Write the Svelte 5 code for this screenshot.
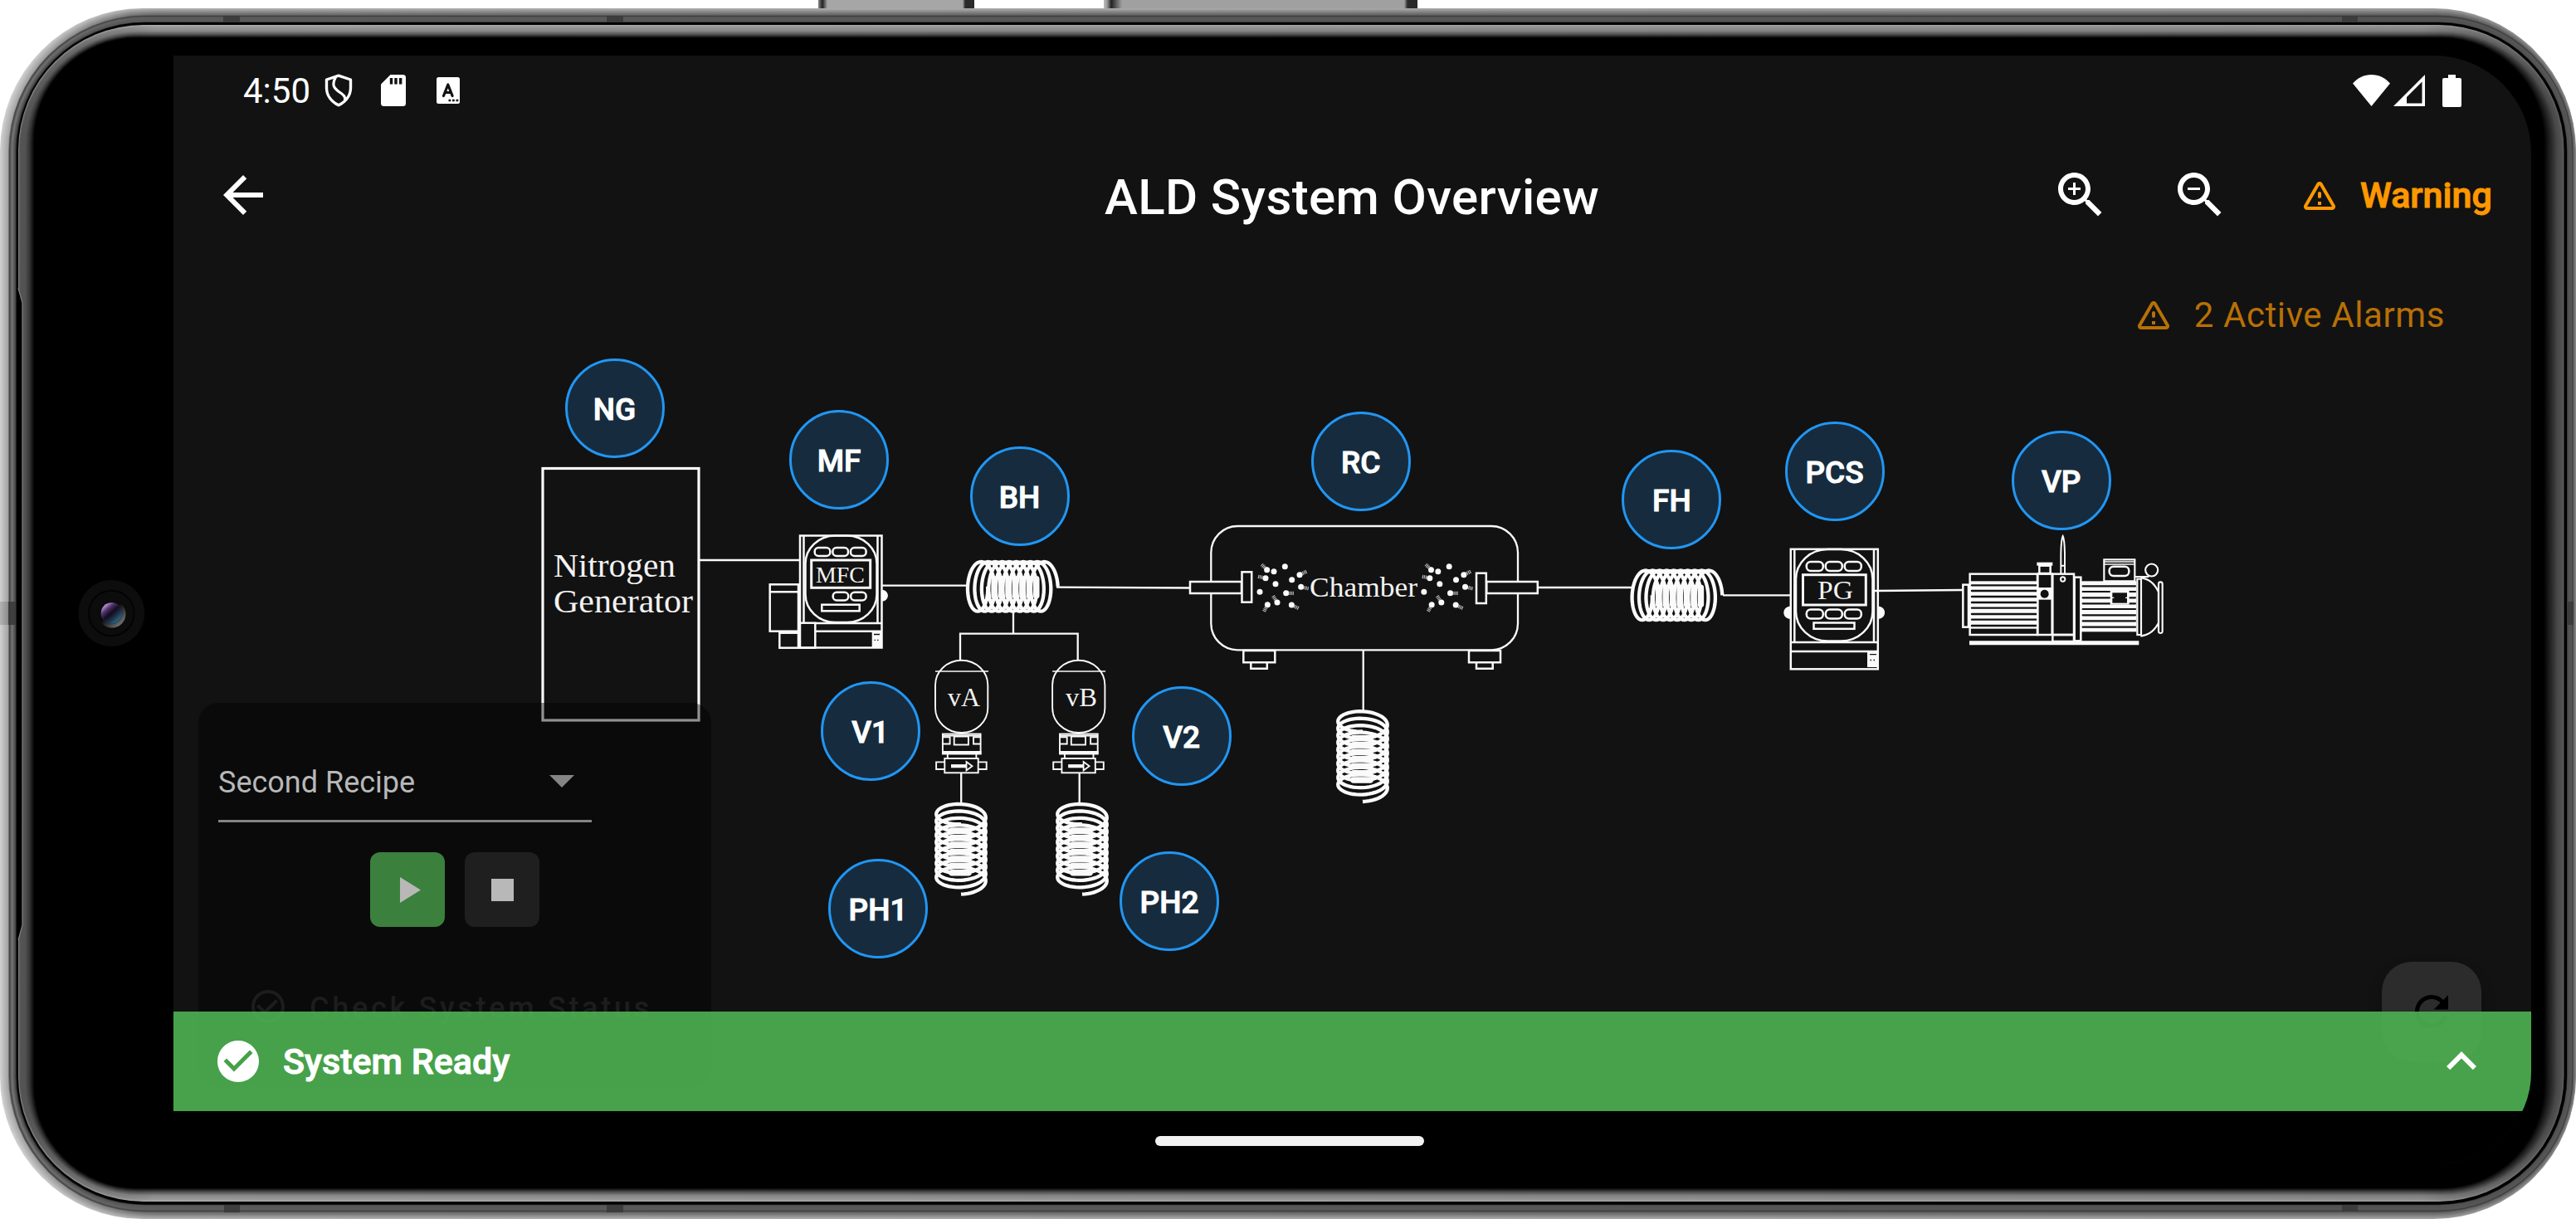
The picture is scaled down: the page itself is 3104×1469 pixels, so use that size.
<script>
  // Metal frame profile, outside in: insets per side (top, left, bottom, right) and grey level for the long edges, the left and the right side
  const keys = [
    { t: 0, l: 0, b: 0, r: 0, m: 176, cl: 208, cr: 140, rad: 172 },
    { t: 8, l: 9, b: 8, r: 3, m: 100, cl: 165, cr: 92, rad: 165 },
    { t: 9, l: 11, b: 9, r: 4, m: 62, cl: 66, cr: 52, rad: 163 },
    { t: 11, l: 14, b: 11, r: 5, m: 92, cl: 118, cr: 86, rad: 161 },
    { t: 16, l: 18, b: 16, r: 10, m: 88, cl: 70, cr: 80, rad: 156 },
    { t: 17, l: 20, b: 17.5, r: 11, m: 0, cl: 0, cr: 0, rad: 155 },
    { t: 19.5, l: 21.5, b: 20.5, r: 14, m: 0, cl: 0, cr: 0, rad: 152 },
    { t: 20, l: 22, b: 21, r: 14.5, m: 172, cl: 130, cr: 96, rad: 151 },
    { t: 21.5, l: 23.5, b: 22.5, r: 16, m: 158, cl: 84, cr: 82, rad: 150 },
    { t: 27, l: 30, b: 28, r: 22, m: 136, cl: 80, cr: 72, rad: 140 },
    { t: 31, l: 35, b: 32, r: 29, m: 84, cl: 52, cr: 40, rad: 132 },
    { t: 35.5, l: 41, b: 37, r: 38, m: 0, cl: 0, cr: 0, rad: 124 }
  ];
  const mix = (a, b, f) => a + (b - a) * f;
  const layers = [];
  keys.forEach((k, i) => {
    const n = keys[i + 1];
    const steps = n ? Math.max(1, Math.round((n.l - k.l) * 1.2)) : 1;
    for (let s = 0; s < steps; s++) {
      const o = {};
      for (const p of Object.keys(k)) o[p] = n ? mix(k[p], n[p], s / steps) : k[p];
      layers.push(o);
    }
  });
  const grey = (v) => `rgb(${Math.round(v)},${Math.round(v)},${Math.round(v)})`;

  // Heater coil: a flattened helix drawn from its free end
  let coil = '';
  for (let i = 0; i <= 480; i++) {
    const t = i / 48;
    const a = t * Math.PI * 2;
    const x = -14.2 - 8.45 * t + 14.2 * Math.cos(a);
    const y = -29.8 * Math.sin(a);
    coil += `${i ? 'L' : 'M'}${x.toFixed(2)} ${y.toFixed(2)}`;
  }
  // Overlapping windings fill the middle of the coil
  let core = '';
  for (let i = 0; i < 7; i++) core += `M${(-76.6 + i * 8.45).toFixed(2)} -9V11`;

  const badges = [
    { id: 'NG', x: 740.5, y: 492 },
    { id: 'MF', x: 1011, y: 554 },
    { id: 'BH', x: 1228.5, y: 598 },
    { id: 'RC', x: 1639.7, y: 556 },
    { id: 'FH', x: 2014.4, y: 602 },
    { id: 'PCS', x: 2210.6, y: 568 },
    { id: 'VP', x: 2483.7, y: 579 },
    { id: 'V1', x: 1048.6, y: 881 },
    { id: 'V2', x: 1423.6, y: 887 },
    { id: 'PH1', x: 1058, y: 1095 },
    { id: 'PH2', x: 1409, y: 1086 }
  ];

  const dots = [[380, 620], [405, 626], [445, 608], [498, 638], [375, 650], [470, 656], [411, 671], [503, 682], [354, 700], [449, 704], [417, 738], [382, 746], [469, 747]];
  const tails = [[380, 620, 361, 601], [375, 650, 346, 644], [498, 638, 525, 625], [503, 682, 531, 688], [449, 704, 477, 705], [417, 738, 401, 713], [382, 746, 369, 771], [469, 747, 496, 760]];
  const bodyLines = [616, 636, 657, 678, 698, 720, 740, 762];
  const motorLines = [619, 639, 661, 682, 702, 724, 745, 767];
</script>

<div class="phone">
  <div class="side-key power"></div>
  <div class="side-key volume"></div>
  <svg class="frame" viewBox="0 0 3104 1469" aria-hidden="true">
    <defs>
      {#each layers as k, i}
        <linearGradient id="ring{i}" gradientUnits="userSpaceOnUse" x1="0" y1="0" x2="3104" y2="0">
          <stop offset="0.008" stop-color={grey(k.cl)} />
          <stop offset="0.06" stop-color={grey(k.m)} />
          <stop offset="0.94" stop-color={grey(k.m * 0.92)} />
          <stop offset="0.99" stop-color={grey(k.cr)} />
        </linearGradient>
      {/each}
      <radialGradient id="lens" cx="0.5" cy="0.5" r="0.5">
        <stop offset="0" stop-color="#140b1e" />
        <stop offset="0.7" stop-color="#1a1230" />
        <stop offset="1" stop-color="#2a1e44" />
      </radialGradient>
      <linearGradient id="glint" x1="0.15" y1="0.1" x2="0.85" y2="0.9">
        <stop offset="0" stop-color="#d8aef4" />
        <stop offset="0.25" stop-color="#5a3c76" stop-opacity="0.8" />
        <stop offset="0.48" stop-color="#120a1c" stop-opacity="0.7" />
        <stop offset="0.88" stop-color="#285a74" />
      </linearGradient>
      <linearGradient id="rim" x1="0.2" y1="0.2" x2="0.8" y2="0.85">
        <stop offset="0.4" stop-color="#0a0a0a" />
        <stop offset="1" stop-color="#6a6a6a" />
      </linearGradient>
    </defs>
    {#each layers as k, i}
      <rect x={k.l} y={10 + k.t} width={3104 - k.l - k.r} height={1459 - k.t - k.b} rx={k.rad} fill="url(#ring{i})" />
    {/each}
    <path d="M21 345L27 365V1115L21 1135Z" fill="#000" />
    <path d="M22 347L27 365V1115L22 1133" fill="none" stroke="#808080" stroke-width="1.2" />
    <g fill="#3a3a3a" opacity="0.9">
      <rect x="269" y="19" width="20" height="8" /><rect x="731" y="19" width="20" height="8" /><rect x="2822" y="19" width="19" height="8" />
      <rect x="270" y="1452" width="19" height="9" /><rect x="731" y="1452" width="20" height="9" /><rect x="2822" y="1452" width="19" height="8" />
      <rect x="10" y="725" width="9" height="28" /><rect x="3094" y="725" width="7" height="28" />
    </g>
    <rect x="0" y="725" width="10" height="28" fill="#000" opacity="0.14" />
    <circle cx="134.3" cy="739" r="40" fill="#0d0d0d" />
    <circle cx="134.3" cy="739" r="27.3" fill="#0c0c0c" stroke="#030303" stroke-width="2" />
    <circle cx="135" cy="740" r="16.5" fill="url(#rim)" />
    <circle cx="134.5" cy="739" r="13" fill="url(#lens)" />
    <circle cx="134.5" cy="739" r="12.8" fill="url(#glint)" />
  </svg>

  <div class="screen">
    <header class="status">
      <span class="time">4:50</span>
      <svg class="shield" viewBox="0 0 34 40"><path d="M17 2.2L31.5 7V17C31.5 26 25.5 33.5 17 37.8C8.5 33.5 2.5 26 2.5 17V7Z" fill="none" stroke="#fff" stroke-width="3.4" stroke-linejoin="round" /><path d="M13.5 4C8 14 12 17.500 18 22C24 26 25.500 28 24.500 32" fill="none" stroke="#fff" stroke-width="3.2" /></svg>
      <svg class="sd" viewBox="0 0 30 38"><path d="M11.500 0H26.500Q30 0 30 3.500V34.500Q30 38 26.500 38H3.500Q0 38 0 34.500V11.500Z" fill="#fff" /><path d="M12.500 4V11.500M18 4V11.500M23.700 4V11.500" stroke="#121212" stroke-width="3.400" /></svg>
      <svg class="abox" viewBox="0 0 28 32"><rect width="28" height="32" rx="2.500" fill="#fff" /><path d="M8.500 22.500L13.800 9L19.100 22.500M10.500 18.500H17.100" fill="none" stroke="#121212" stroke-width="3.200" stroke-linejoin="round" stroke-linecap="round" /><path d="M14.500 28H17.300M19 28H21.800M23.500 28H26.300" stroke="#121212" stroke-width="2.600" /></svg>
      <div class="signals">
        <svg class="wifi" viewBox="0 0 45 38"><path d="M22.500 38L0 10.500C6 4 13.500 0 22.500 0S39 4 45 10.500Z" fill="#fff" /></svg>
        <svg class="cell" viewBox="0 0 38 38"><path d="M38 0V38H0ZM34.500 8.500L16 27V34.500H34.500Z" fill="#fff" fill-rule="evenodd" /></svg>
        <svg class="battery" viewBox="0 0 23 39"><path d="M7 0H16V4H21Q23 4 23 6V37Q23 39 21 39H2Q0 39 0 37V6Q0 4 2 4H7Z" fill="#fff" /></svg>
      </div>
    </header>

    <div class="appbar">
      <svg class="i72 back" viewBox="0 0 24 24"><path d="M20 11H7.830l5.590-5.590L12 4l-8 8 8 8 1.410-1.410L7.830 13H20v-2z" fill="#fff" /></svg>
      <h1>ALD System Overview</h1>
      <div class="actions">
        <svg class="i72" viewBox="0 0 24 24" fill="#fff"><path d="M15.500 14h-.79l-.28-.27C15.410 12.590 16 11.110 16 9.500 16 5.910 13.090 3 9.500 3S3 5.910 3 9.500 5.910 16 9.500 16c1.610 0 3.090-.59 4.230-1.570l.27.28v.79l5 4.990L20.490 19l-4.990-5zm-6 0C7.010 14 5 11.990 5 9.500S7.010 5 9.500 5 14 7.010 14 9.500 11.990 14 9.500 14z" /><path d="M12 10h-2v2H9v-2H7V9h2V7h1v2h2v1z" /></svg>
        <svg class="i72" viewBox="0 0 24 24" fill="#fff"><path d="M15.500 14h-.79l-.28-.27C15.410 12.590 16 11.110 16 9.500 16 5.910 13.090 3 9.500 3S3 5.910 3 9.500 5.910 16 9.500 16c1.610 0 3.090-.59 4.230-1.570l.27.28v.79l5 4.990L20.490 19l-4.990-5zm-6 0C7.010 14 5 11.990 5 9.500S7.010 5 9.500 5 14 7.010 14 9.500 11.990 14 9.500 14zM7 9h5v1H7z" /></svg>
        <div class="warning">
          {@render warn()}
          <span>Warning</span>
        </div>
      </div>
    </div>

    <main class="canvas">
      <svg class="diagram" viewBox="209 319 2841 1020" fill="none" stroke="#fafafa" stroke-width="2.500">
        <rect x="654" y="564.500" width="188" height="303.500" stroke-width="3.200" />
        <g class="label">
          <text x="667" y="694.500" font-size="39" textLength="147" lengthAdjust="spacingAndGlyphs">Nitrogen</text>
          <text x="667" y="738" font-size="39" textLength="168" lengthAdjust="spacingAndGlyphs">Generator</text>
          <text x="983" y="702" font-size="26.500" textLength="59" lengthAdjust="spacingAndGlyphs">MFC</text>
          <text x="1142" y="850.700" font-size="31.500" textLength="39" lengthAdjust="spacingAndGlyphs">vA</text>
          <text x="1284" y="850.700" font-size="31.500" textLength="38" lengthAdjust="spacingAndGlyphs">vB</text>
          <text x="1578" y="718.500" font-size="33" textLength="130" lengthAdjust="spacingAndGlyphs">Chamber</text>
          <text x="2190" y="722.300" font-size="32" textLength="43" lengthAdjust="spacingAndGlyphs">PG</text>
        </g>

        <path d="M842 675H963M1062 705.700H1166M1273 707.700L1434 708.500M1853 708H1967M2076 717.300H2157M2259 712L2365 711M1221 738V763.700M1157 795.700V763.700H1298.700V795.700M1158.200 932V968M1300.700 932V968M1642.700 783V858" stroke-width="2.300" />

        <!-- mass flow controller -->
        <rect x="964" y="645.500" width="98.500" height="135" />
        <path d="M968.500 645V750M1057.500 645V750M983 751H1062M983 760.700H1062" />
        <rect x="970.500" y="645.500" width="86" height="104.500" rx="36" ry="34" />
        <rect x="981.700" y="660" width="18.600" height="10" rx="4.500" /><rect x="1003.400" y="660" width="18.600" height="10" rx="4.500" /><rect x="1025" y="660" width="18.600" height="10" rx="4.500" />
        <rect x="977.700" y="675" width="71" height="33.300" stroke-width="3" />
        <rect x="1003.700" y="713.700" width="18.500" height="9.800" rx="4.500" /><rect x="1025.200" y="713.700" width="18.400" height="9.800" rx="4.500" />
        <rect x="990.300" y="728.700" width="45.400" height="7.600" />
        <path d="M1062 710.700C1072.500 710.700 1072.500 724.700 1062 724.700Z" fill="#fafafa" stroke="none" />
        <rect x="927.700" y="704.300" width="34.300" height="56.400" /><path d="M928 713.300H962" /><rect x="939.300" y="762.700" width="22.700" height="18" /><rect x="963.300" y="750.700" width="19" height="30" />
        <rect x="1050.700" y="761.500" width="11.300" height="19" fill="#fafafa" stroke="none" /><path d="M1053 764.500H1060M1053.500 771.300H1055M1057 771.300H1058.500" stroke="#121212" stroke-width="1.300" />

        <!-- pressure gauge -->
        <rect x="2157.800" y="661.800" width="105" height="144.500" />
        <path d="M2162.300 662V773M2258 662V773M2158 774H2262M2158 785H2262" />
        <rect x="2164" y="662" width="92.500" height="110.500" rx="38" ry="36" />
        <rect x="2176.800" y="677" width="20" height="11" rx="5" /><rect x="2199.800" y="677" width="20" height="11" rx="5" /><rect x="2222.800" y="677" width="20" height="11" rx="5" />
        <rect x="2172.500" y="692.700" width="75.800" height="36.300" stroke-width="3" />
        <rect x="2176.800" y="734.500" width="20" height="11" rx="5" /><rect x="2199.800" y="734.500" width="20" height="11" rx="5" /><rect x="2222.800" y="734.500" width="20" height="11" rx="5" />
        <rect x="2185.500" y="750.500" width="49" height="7.300" />
        <path d="M2262.500 730.500C2274 730.500 2274 746 2262.500 746ZM2158 730.500C2146.500 730.500 2146.500 746 2158 746Z" fill="#fafafa" stroke="none" />
        <rect x="2250" y="786" width="12.500" height="18" fill="#fafafa" stroke="none" /><path d="M2253 788.700H2261M2253.500 795.500H2255M2257.500 795.500H2259" stroke="#121212" stroke-width="1.300" />

        <!-- heater coils -->
        {#each ['translate(1274.7 706.8)', 'translate(2075.3 717.3)', 'translate(1642 966) rotate(90)', 'translate(1158 1077.7) rotate(90)', 'translate(1304 1077.7) rotate(90)'] as place}
          <g transform={place}>
            <path d={coil} stroke-width="4.300" />
            <path d={core} stroke-width="7.500" stroke-linecap="round" />
          </g>
        {/each}

        <!-- precursor vessels and valves -->
        {#each [0, 141.100] as dx}
          <g transform="translate({dx} 0)" stroke-width="1.900">
            <rect x="1127" y="795.700" width="63.300" height="87.300" rx="31.600" ry="30" />
            <path d="M1127 809H1191" stroke-width="1.500" />
            <rect x="1135.900" y="884.500" width="45.700" height="24" /><path d="M1136 886.500H1181.500" />
            <path d="M1135 907H1182.500" stroke-width="4" />
            <path d="M1136 888.300H1144.600V896.500H1136M1181.500 888.300H1173V896.500H1181.500" />
            <rect x="1149.700" y="887.500" width="17.200" height="10" />
            <path d="M1141.800 909V913.500M1176.400 909V913.500" />
            <rect x="1138.300" y="914" width="40.400" height="17.300" />
            <path d="M1138 918.400H1128.100V927H1138M1179 918.400H1188.700V927H1179" />
            <path d="M1146 923.200H1164.500" stroke-width="4.200" />
            <path d="M1164.500 918L1171.500 923.200L1164.500 928.400Z" stroke-width="1.800" />
          </g>
        {/each}

        <!-- reaction chamber -->
        <rect x="1459.300" y="634" width="369.700" height="149.300" rx="32" stroke-width="2.300" />
        <g fill="#121212">
          <rect x="1434" y="701" width="62" height="14" /><rect x="1496.500" y="689.300" width="11.700" height="36.400" />
          <rect x="1791.300" y="701" width="61.500" height="14" /><rect x="1779" y="690.700" width="11.800" height="36.300" />
        </g>
        <path d="M1498.300 784V798.300H1536.300V784ZM1507.300 799.300V805.800H1526.800V799.300M1770 784V798.300H1808V784ZM1779 799.300V805.800H1798.700V799.300" />
        {#each [0, 593.500] as dx}
          <g transform="translate({1400 + dx / 3} 480) scale(0.33333)">
            {#each tails as [x1, y1, x2, y2]}
              <line {x1} {y1} {x2} {y2} stroke-width="13" stroke-dasharray="3.500 2.500" opacity="0.75" />
            {/each}
            {#each dots as [cx, cy]}
              <circle {cx} {cy} r="10.500" fill="#fafafa" stroke="none" />
            {/each}
          </g>
        {/each}

        <!-- vacuum pump -->
        <g transform="translate(2300 500) scale(0.33333)" stroke-width="7.500">
          <rect x="196" y="614" width="20" height="153" />
          <rect x="221" y="575" width="244" height="220" />
          <rect x="222" y="601" width="244" height="172" fill="#fafafa" stroke="none" />
          {#each bodyLines as y}<path d="M228 {y}H462" stroke="#121212" stroke-width="7" stroke-linecap="round" />{/each}
          <rect x="466" y="575" width="52" height="220" />
          <rect x="466" y="624" width="50" height="44" fill="#fafafa" stroke="none" /><circle cx="491" cy="647" r="15" fill="#121212" stroke="none" />
          <path d="M463 539H520" stroke-width="12" /><rect x="472" y="545" width="40" height="28" />
          <rect x="520" y="575" width="77" height="220" /><rect x="520" y="795" width="77" height="24" />
          <path d="M550 574V500Q551 450 557 438Q563 450 564 500V574M550 545H564" stroke-width="6" /><circle cx="557" cy="594" r="8" stroke-width="6" />
          <rect x="599" y="587" width="23" height="230" />
          <rect x="624" y="601" width="199" height="183" fill="#fafafa" stroke="none" />
          {#each motorLines as y}<path d="M629 {y}H819" stroke="#121212" stroke-width="6.500" stroke-linecap="round" />{/each}
          <rect x="728" y="630" width="69" height="56" fill="#fafafa" stroke="none" />
          <rect x="736" y="643" width="53" height="37" fill="#121212" stroke="none" /><path d="M734 661H742M783 661H791" stroke-width="4" />
          <rect x="706" y="523" width="111" height="78" stroke-width="6.500" /><path d="M706 531H817M706 540H817" stroke-width="4.500" />
          <rect x="725" y="548" width="71" height="34" rx="15" />
          <path d="M817 585H868" stroke-width="6" /><circle cx="878" cy="561" r="22.500" stroke-width="6.500" />
          <rect x="826" y="593" width="14" height="202" stroke-width="6.500" />
          <path d="M838 589Q880 592 903 640V752Q880 795 838 800" stroke-width="6.500" />
          <rect x="903" y="604" width="14" height="185" rx="7" stroke-width="6.500" />
          <path d="M219 824H832" stroke-width="15" />
        </g>
      </svg>

      <div class="alarms">
        {@render warn()}
        <span>2 Active Alarms</span>
      </div>

      <section class="recipe">
        <div class="select">
          <span>Second Recipe</span>
          <svg viewBox="0 0 30 15"><path d="M0 0H30L15 15Z" fill="#858585" /></svg>
        </div>
        <div class="controls">
          <button class="play" aria-label="Run"><svg viewBox="0 0 25 31"><path d="M0 0L25 15.500L0 31Z" fill="#b8b8b8" /></svg></button>
          <button class="stop" aria-label="Stop"><i></i></button>
        </div>
        <div class="check">
          <svg viewBox="0 0 24 24"><path d="M16.590 7.580L10 14.170l-3.590-3.580L5 12l5 5 8-8zM12 2C6.480 2 2 6.480 2 12s4.480 10 10 10 10-4.480 10-10S17.520 2 12 2zm0 18c-4.420 0-8-3.580-8-8s3.580-8 8-8 8 3.580 8 8-3.580 8-8 8z" fill="#1d1d1d" /></svg>
          <span>Check System Status</span>
        </div>
      </section>

      {#each badges as b}
        <div class="badge" style="left:{b.x - 209}px;top:{b.y - 319}px">{b.id}</div>
      {/each}

      <div class="fab"><svg viewBox="0 0 24 24"><path d="M17.650 6.350C16.200 4.900 14.210 4 12 4c-4.420 0-7.990 3.580-7.990 8s3.570 8 7.990 8c3.730 0 6.840-2.550 7.730-6h-2.080c-.82 2.330-3.040 4-5.650 4-3.310 0-6-2.690-6-6s2.690-6 6-6c1.660 0 3.140.69 4.220 1.780L13 11h7V4l-2.350 2.350z" fill="#000" /></svg></div>

      <footer class="ready">
        <svg class="ok" viewBox="0 0 24 24"><path d="M12 2C6.480 2 2 6.480 2 12s4.480 10 10 10 10-4.480 10-10S17.520 2 12 2zm-2 15l-5-5 1.410-1.410L10 14.170l7.590-7.590L19 8l-9 9z" fill="#fff" /></svg>
        <span>System Ready</span>
        <svg class="i72 up" viewBox="0 0 24 24"><path d="M12 8l-6 6 1.410 1.410L12 10.830l4.590 4.580L18 14z" fill="#fff" /></svg>
      </footer>
    </main>

    <nav><div class="pill"></div></nav>
  </div>
</div>

{#snippet warn()}
  <svg class="warn" viewBox="0 0 24 24"><path d="M12 5.990L19.530 19H4.470L12 5.990M2.740 18c-.77 1.330.19 3 1.730 3h15.060c1.540 0 2.500-1.670 1.730-3L13.730 4.990c-.77-1.330-2.690-1.330-3.460 0L2.740 18zM11 11v2c0 .55.45 1 1 1s1-.45 1-1v-2c0-.55-.45-1-1-1s-1 .45-1 1zm0 5h2v2h-2z" fill="currentColor" /></svg>
{/snippet}

<style>
  :global(body) { margin: 0; background: #fff; }
  .phone {
    position: relative; box-sizing: border-box; width: 3104px; height: 1469px;
    padding: 67px 54px 67px 209px; overflow: hidden; display: flex;
    font-family: Roboto, "Liberation Sans", sans-serif; color: #fff;
  }
  svg { display: block; flex: none; }
  .frame { position: absolute; inset: 0; width: 3104px; height: 1469px; }
  .side-key { position: absolute; top: 0; height: 10px; background: linear-gradient(#a8a8a8 0 8px, #555 9px); }
  .power { left: 986px; width: 188px; background: linear-gradient(90deg, #888 0, #222 5px, #a6a6a6 11px 174px, #2a2a2a 177px); }
  .volume { left: 1330px; width: 378px; background: linear-gradient(90deg, #bbb 0, #999 4px, #222 9px, #a0a0a0 22px 362px, #2a2a2a 366px); }
  .screen {
    position: relative; flex: 1; display: flex; flex-direction: column; overflow: hidden;
    background: #121212; border-radius: 0 117px 110px 0;
  }
  .status { height: 84px; display: flex; align-items: center; box-sizing: border-box; padding: 0 84px 0 84px; }
  .time { font-size: 42px; width: 98px; }
  .shield { width: 34px; height: 40px; }
  .sd { width: 30px; height: 38px; margin-left: 34px; }
  .abox { width: 28px; height: 32px; margin-left: 37px; }
  .signals { display: flex; align-items: center; margin-left: auto; }
  .wifi { width: 45px; height: 38px; }
  .cell { width: 38px; height: 38px; margin-left: 4px; }
  .battery { width: 23px; height: 39px; margin-left: 21px; }
  .appbar { height: 168px; display: grid; grid-template-columns: 1122px 1fr auto; align-items: center; }
  .i72 { width: 72px; height: 72px; }
  .back { margin-left: 48px; }
  h1 { margin: 6px 0 0; font-size: 60px; font-weight: 500; line-height: 72px; letter-spacing: 0.4px; white-space: nowrap; }
  .actions { display: flex; align-items: center; gap: 72px; padding-right: 48px; }
  .warning { display: flex; align-items: center; gap: 25px; width: 231px; margin-left: 12px; color: #ff9800; white-space: nowrap; }
  .warning span, .ready span { font-size: 43px; font-weight: 500; -webkit-text-stroke: 1px currentColor; }
  .warn { width: 48px; height: 48px; }
  .canvas { position: relative; flex: none; height: 1020px; }
  .diagram { position: absolute; inset: 0; width: 2841px; height: 1020px; }
  .label { fill: #f2f2f2; stroke: none; font-family: "Liberation Serif", serif; }
  .alarms {
    position: relative; display: flex; align-items: center; justify-content: flex-end; gap: 25px;
    height: 120px; padding-right: 104px; color: #b87005; font-size: 42px; letter-spacing: 0.6px;
  }
  .recipe {
    position: absolute; left: 30px; top: 528px; width: 618px; height: 463px; box-sizing: border-box;
    border-radius: 24px; background: rgba(0, 0, 0, 0.42); padding: 48px 24px 0;
  }
  .select {
    width: 450px; height: 96px; box-sizing: border-box; border-bottom: 3px solid #858585; display: flex;
    align-items: center; justify-content: space-between; padding: 0 21px 0 0; font-size: 36px; color: #b8b8b8;
  }
  .select span { padding-top: 3px; }
  .select svg { width: 30px; height: 15px; }
  .controls { display: flex; justify-content: center; gap: 24px; margin-top: 36px; }
  .controls button {
    width: 90px; height: 90px; border: 0; padding: 0; border-radius: 12px; display: flex;
    align-items: center; justify-content: center; background: #1f1f1f;
  }
  .controls .play { background: #3b803d; }
  .play svg { width: 25px; height: 31px; margin-left: 7px; }
  .stop i { width: 27px; height: 27px; background: #b8b8b8; }
  .check { display: flex; align-items: center; gap: 26px; margin: 72px 0 0 36px; color: #1d1d1d; font-size: 36px; font-weight: 500; letter-spacing: 3.7px; white-space: nowrap; }
  .check span { padding-top: 3px; }
  .check svg { width: 48px; height: 48px; }
  .badge {
    position: absolute; width: 120px; height: 120px; margin: -60px 0 0 -60px; box-sizing: border-box;
    border: 3px solid #2196f3; border-radius: 50%; background: #162c3e; display: flex; align-items: center;
    justify-content: center; font-size: 37px; font-weight: 500; -webkit-text-stroke: 1px #fff; padding-top: 3px;
  }
  .fab {
    position: absolute; left: 2661px; top: 840px; width: 120px; height: 120px; border-radius: 36px; background: #2c2c2c;
    display: flex; align-items: center; justify-content: center; box-shadow: 0 8px 16px rgba(0, 0, 0, 0.25);
  }
  .fab svg { width: 60px; height: 60px; }
  .ready {
    position: absolute; left: 0; right: 0; bottom: 0; height: 120px; display: flex; align-items: center;
    background: rgba(76, 175, 80, 0.92); padding: 0 48px;
  }
  .ok { width: 60px; height: 60px; margin-right: 24px; }
  .up { margin-left: auto; }
  nav { flex: 1; background: #000; display: flex; justify-content: center; align-items: center; padding-right: 151px; }
  .pill { width: 324px; height: 12px; border-radius: 6px; background: #f2f2f2; margin-top: 8px; }
</style>
